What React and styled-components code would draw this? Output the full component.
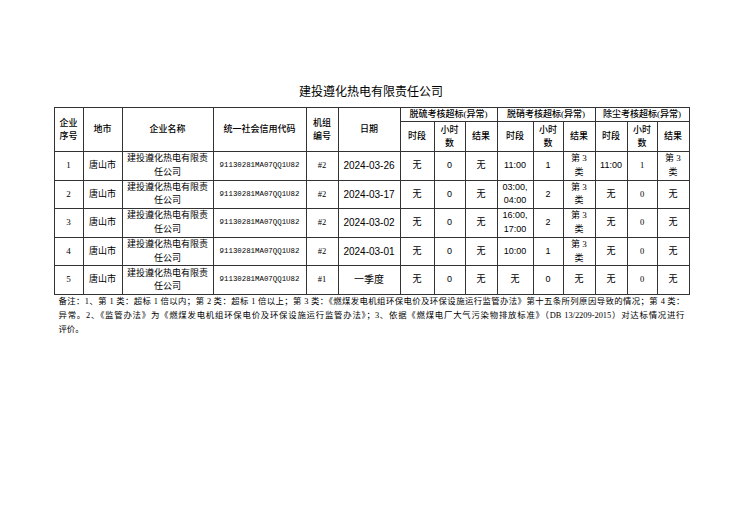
import React from 'react'
import styled, { createGlobalStyle } from 'styled-components'

const SERIF = '"Liberation Serif", "Noto Sans CJK SC", serif'
const SANS = '"Liberation Sans", "Noto Sans CJK SC", sans-serif'

const GlobalStyle = createGlobalStyle`
    html, body {
        margin: 0;
        background: #fff;
    }
    body {
        font-family: ${SERIF};
        color: #000;
    }
`;

const PageStyled = styled.div`
    width: 635px;
    margin: 0 auto;
    padding-top: 84px;
`;

const TitleStyled = styled.h1`
    margin: 0 0 7px;
    font-size: 12px;
    line-height: 16px;
    font-weight: normal;
    text-align: center;
`;

const TableStyled = styled.table`
    width: 635px;
    border-collapse: collapse;
    table-layout: fixed;
`;

const RowStyled = styled.tr`
    height: ${(p) => p.$h}px;
`;

const HeadCell = styled.th`
    border: 1px solid #333;
    padding: 0 4px;
    font-size: 9px;
    line-height: 13px;
    font-weight: 500;
    text-align: center;
    vertical-align: middle;
`;

const Cell = styled.td`
    border: 1px solid #333;
    padding: 0 4px;
    font-family: ${(p) => (p.$mono ? '"Liberation Mono", monospace' : p.$sans ? SANS : SERIF)};
    font-size: ${(p) => p.$size || 9}px;
    line-height: 13.5px;
    text-align: center;
    vertical-align: middle;
`;

const NoteStyled = styled.div`
    padding: 0 4px 0 5px;
    font-size: 8.4px;
    line-height: 14px;
`;

const NoteLine = styled.div`
    text-align: justify;
    text-align-last: ${(p) => (p.$last ? 'left' : 'justify')};
`;

const COLS = [29, 39, 91, 93, 32, 62, 34, 31, 32, 36, 30, 32, 32, 30, 32]

const NAME = '建投遵化热电有限责任公司'
const CODE = '91130281MA07QQ1U82'
const CLASS3 = '第 3 类'

const rows = [
    { n: 1, unit: '#2', date: '2024-03-26', s: ['无', '0', '无'], x: ['11:00', '1', CLASS3], d: ['11:00', '1', CLASS3] },
    { n: 2, unit: '#2', date: '2024-03-17', s: ['无', '0', '无'], x: ['03:00, 04:00', '2', CLASS3], d: ['无', '0', '无'] },
    { n: 3, unit: '#2', date: '2024-03-02', s: ['无', '0', '无'], x: ['16:00, 17:00', '2', CLASS3], d: ['无', '0', '无'] },
    { n: 4, unit: '#2', date: '2024-03-01', s: ['无', '0', '无'], x: ['10:00', '1', CLASS3], d: ['无', '0', '无'] },
    { n: 5, unit: '#1', date: '一季度', s: ['无', '0', '无'], x: ['无', '0', '无'], d: ['无', '0', '无'] },
]

const groups = ['脱硫考核超标(异常)', '脱硝考核超标(异常)', '除尘考核超标(异常)']

// time and hours cells: digits are sans in the first two groups, serif in the last
function GroupCells({ values, serifHours }) {
    const [time, hours, result] = values
    const isDigit = (v) => /\d/.test(v)
    return (
        <>
            <Cell $sans={isDigit(time)}>{time}</Cell>
            <Cell $sans={!serifHours && isDigit(hours)} $size={serifHours ? 8.5 : 9}>{hours}</Cell>
            <Cell>{result}</Cell>
        </>
    )
}

export default function App() {
    return (
        <>
            <GlobalStyle />
            <PageStyled>
                <TitleStyled>{NAME}</TitleStyled>
                <TableStyled>
                    <colgroup>
                        {COLS.map((w, i) => <col key={i} style={{ width: w }} />)}
                    </colgroup>
                    <thead>
                        <RowStyled $h={14}>
                            <HeadCell rowSpan={2}>企业序号</HeadCell>
                            <HeadCell rowSpan={2}>地市</HeadCell>
                            <HeadCell rowSpan={2}>企业名称</HeadCell>
                            <HeadCell rowSpan={2}>统一社会信用代码</HeadCell>
                            <HeadCell rowSpan={2}>机组编号</HeadCell>
                            <HeadCell rowSpan={2}>日期</HeadCell>
                            {groups.map((g) => <HeadCell key={g} colSpan={3}>{g}</HeadCell>)}
                        </RowStyled>
                        <RowStyled $h={30}>
                            {groups.map((g) => (
                                <React.Fragment key={g}>
                                    <HeadCell>时段</HeadCell>
                                    <HeadCell>小时数</HeadCell>
                                    <HeadCell>结果</HeadCell>
                                </React.Fragment>
                            ))}
                        </RowStyled>
                    </thead>
                    <tbody>
                        {rows.map((r) => (
                            <RowStyled key={r.n} $h={28.6}>
                                <Cell $size={9}>{r.n}</Cell>
                                <Cell>唐山市</Cell>
                                <Cell>{NAME}</Cell>
                                <Cell $mono $size={7.4}>{CODE}</Cell>
                                <Cell $size={8.5}>{r.unit}</Cell>
                                <Cell $sans $size={10}>{r.date}</Cell>
                                <GroupCells values={r.s} />
                                <GroupCells values={r.x} />
                                <GroupCells values={r.d} serifHours />
                            </RowStyled>
                        ))}
                    </tbody>
                </TableStyled>
                <NoteStyled>
                    <NoteLine>备注：1、第 1 类：超标 1 倍以内；第 2 类：超标 1 倍以上；第 3 类：《燃煤发电机组环保电价及环保设施运行监管办法》第十五条所列原因导致的情况；第 4 类：</NoteLine>
                    <NoteLine>异常。2、《监管办法》为《燃煤发电机组环保电价及环保设施运行监管办法》；3、依据《燃煤电厂大气污染物排放标准》（DB 13/2209-2015）对达标情况进行</NoteLine>
                    <NoteLine $last>评价。</NoteLine>
                </NoteStyled>
            </PageStyled>
        </>
    )
}
